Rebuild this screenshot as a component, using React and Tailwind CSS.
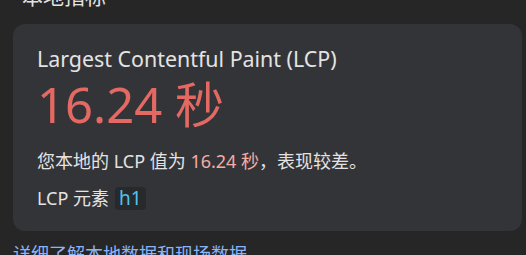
export default function App() {
  return (
    <div className="h-[255px] w-[526px] overflow-hidden bg-[#262627] font-['Noto_Sans','Noto_Sans_CJK_SC',sans-serif] text-[#e3e3e3]">
      {/* heading, scrolled mostly out of view */}
      <div className="mt-[-14px] ml-[22px] h-[20px] text-[21px] leading-[20px]">本地指标</div>

      <div className="mt-[18px] ml-[13px] mr-[4px] rounded-[12px] bg-[#333438] px-6 pt-[21px] pb-[20px]">
        <div className="text-[21.4px] leading-[28px]">Largest Contentful Paint (LCP)</div>
        <div className="mt-[3px] text-[49px] leading-[56px] text-[#e46962]">16.24 秒</div>
        <div className="mt-[16px] text-[18px] leading-[26px]">
          您本地的 LCP 值为 <span className="text-[#f4aca4]">16.24 秒</span>，表现较差。
        </div>
        <div className="mt-[11px] flex items-center gap-[6px] text-[18px] leading-[26px]">
          <span>LCP 元素</span>
          <span className="rounded-[4px] bg-[#28292b] px-[4px] text-[19px] leading-[23px] text-[#4fc3ea]">h1</span>
        </div>
      </div>

      <a className="mt-[10px] ml-[13px] block text-[18px] leading-[26px] text-[#8ab4f8] underline">详细了解本地数据和现场数据</a>
    </div>
  );
}
